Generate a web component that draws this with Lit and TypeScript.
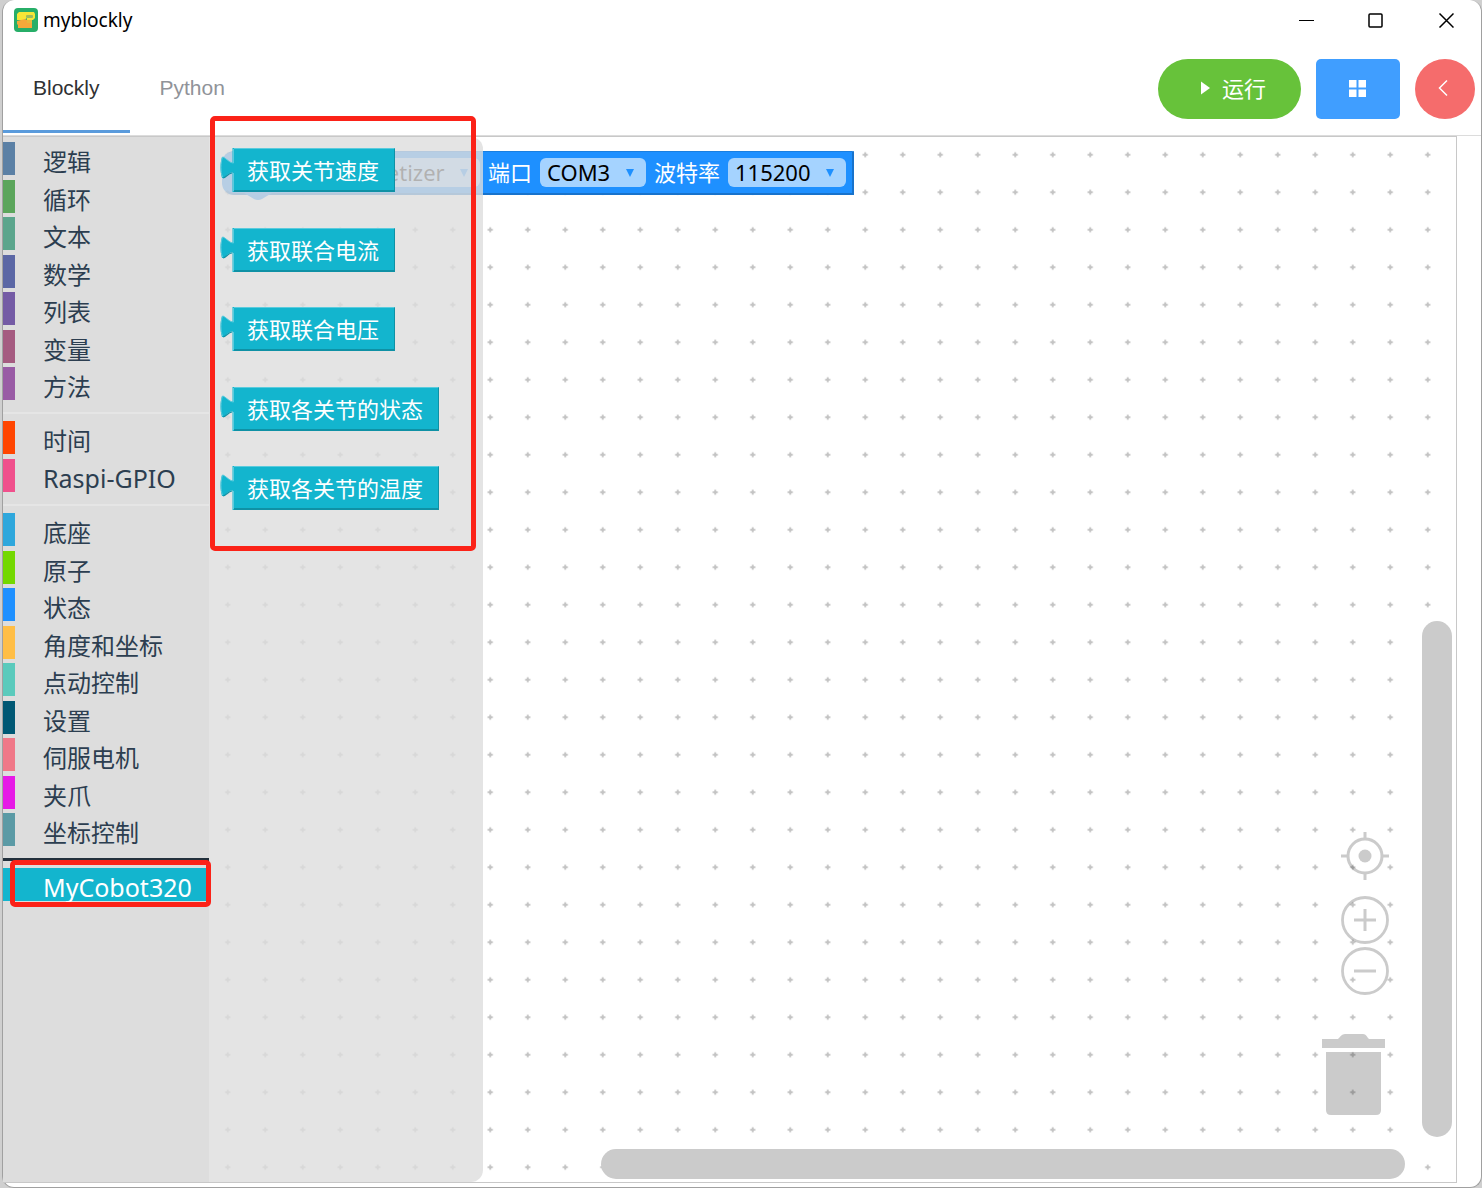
import { LitElement, html, svg, css } from "lit";
import { customElement, property, state } from "lit/decorators.js";

interface Category {
  name: string;
  color: string;
}

const GROUPS: Category[][] = [
  [
    { name: "逻辑", color: "#5b80a5" },
    { name: "循环", color: "#5ba55b" },
    { name: "文本", color: "#5ba58c" },
    { name: "数学", color: "#5b67a5" },
    { name: "列表", color: "#745ba5" },
    { name: "变量", color: "#a55b80" },
    { name: "方法", color: "#995ba5" },
  ],
  [
    { name: "时间", color: "#ff4500" },
    { name: "Raspi-GPIO", color: "#f0508c" },
  ],
  [
    { name: "底座", color: "#2ea7dc" },
    { name: "原子", color: "#73d800" },
    { name: "状态", color: "#1e90ff" },
    { name: "角度和坐标", color: "#ffbe46" },
    { name: "点动控制", color: "#5acabc" },
    { name: "设置", color: "#005874" },
    { name: "伺服电机", color: "#f07888" },
    { name: "夹爪", color: "#e619e6" },
    { name: "坐标控制", color: "#5b9aa5" },
  ],
  [{ name: "MyCobot320", color: "#13b5ce" }],
];

const FLYOUT_BLOCKS = [
  "获取关节速度",
  "获取联合电流",
  "获取联合电压",
  "获取各关节的状态",
  "获取各关节的温度",
];

const isLatin = (text: string) => /^[\x20-\x7e]+$/.test(text);

@customElement("category-list")
class CategoryList extends LitElement {
  @property() selected = "";

  static styles = css`
    :host {
      display: block;
      background: #dddddd;
      padding-top: 5px;
      font: 24px/33px "Noto Sans", "Noto Sans CJK SC", sans-serif;
      color: #2c3e50;
    }
    ul {
      list-style: none;
      margin: 0;
      padding: 0;
      display: flex;
      flex-direction: column;
    }
    li {
      position: relative;
      margin-bottom: 4px;
    }
    li:nth-child(odd):not(:last-child) {
      margin-bottom: 5px;
    }
    .rule {
      border: 0;
      height: 2px;
      margin: 8px 0 7px;
      background: #e5e5e5;
    }
    .rule.strong {
      height: 3px;
      background: #22303c;
    }
    button {
      display: block;
      width: 100%;
      height: 33px;
      border: 0;
      border-left: 12px solid;
      padding: 3px 0 0 28px;
      background: none;
      color: inherit;
      font: inherit;
      text-align: left;
      white-space: nowrap;
    }
    .label {
      color: #2c3e50;
    }
    .latin {
      font-size: 25px;
    }
    .selected .label {
      color: #ffffff;
    }
    .selected button {
      background: #13b5ce;
    }
    .mark {
      position: absolute;
      inset: -8px -2px -6px 7px;
      border: 5px solid #fb2218;
      border-radius: 5px;
      pointer-events: none;
      z-index: 1;
    }
  `;

  private pick(name: string) {
    this.dispatchEvent(new CustomEvent("pick", { detail: name }));
  }

  render() {
    return GROUPS.map(
      (group, i) => html`
        ${i > 0 ? html`<hr class="rule ${i === GROUPS.length - 1 ? "strong" : ""}" />` : ""}
        <ul>
          ${group.map(
            (c) => html`<li class=${c.name === this.selected ? "selected" : ""}>
              <button type="button" style="border-color:${c.color}" @click=${() => this.pick(c.name)}>
                <span class="label ${isLatin(c.name) ? "latin" : ""}">${c.name}</span>
              </button>
              ${c.name === this.selected ? html`<span class="mark"></span>` : ""}
            </li>`
          )}
        </ul>
      `
    );
  }
}

@customElement("value-block")
class ValueBlock extends LitElement {
  @property() label = "";

  static styles = css`
    :host {
      display: flex;
    }
    .tab {
      width: 14px;
      height: 44px;
      margin-right: -1px;
      flex: none;
      position: relative;
    }
    button {
      height: 44px;
      border: 1px solid;
      border-color: #5acbdd #0f91a5 #0f91a5 #13b5ce;
      border-bottom-width: 2px;
      padding: 0 15px 0 13px;
      background: #13b5ce;
      color: #ffffff;
      font: 22px/28px "Noto Sans", "Noto Sans CJK SC", sans-serif;
      white-space: nowrap;
    }
  `;

  render() {
    return html`
      <svg class="tab" viewBox="0 0 14 44" aria-hidden="true">
        <path d="M14 0H12.500V14.500C9 15 5 8 2 9C0 15 0 24 2 30C5 31 8 24 12.500 24.500V44H14Z" fill="#13b5ce" />
        <path d="M13.500 1V15C9 15 5 9 2.500 9C0.500 15 0.500 24 2.500 29M13.500 25V43" fill="none" stroke="#5acbdd" stroke-width="1" />
        <path d="M3 30C6 30 8 25 12 25" fill="none" stroke="#0f91a5" stroke-width="1.200" />
      </svg>
      <button type="button">${this.label}</button>
    `;
  }
}

@customElement("block-select")
class BlockSelect extends LitElement {
  @property() label = "";
  @property({ type: Array }) options: string[] = [];

  static styles = css`
    :host {
      display: inline-flex;
      position: relative;
    }
    select {
      appearance: none;
      height: 29px;
      border: 0;
      border-radius: 6px;
      padding: 0 35px 0 7px;
      background: #a5d3ff;
      color: #000000;
      font: 22px/29px "Noto Sans", "Noto Sans CJK SC", sans-serif;
    }
    svg {
      position: absolute;
      right: 12px;
      top: 11px;
      width: 8px;
      height: 8px;
      pointer-events: none;
    }
  `;

  render() {
    return html`
      <select aria-label=${this.label}>
        ${this.options.map((o) => html`<option>${o}</option>`)}
      </select>
      <svg viewBox="0 0 8 8" aria-hidden="true"><path d="M0 0H8L4 8Z" fill="#1e90ff" /></svg>
    `;
  }
}

@customElement("app-root")
class AppRoot extends LitElement {
  @state() private tab = "Blockly";
  @state() private category = "MyCobot320";

  static styles = css`
    :host {
      display: flex;
      box-sizing: border-box;
      min-height: 100vh;
      padding-left: 2px;
      background: #cfcfcf;
      font-family: "Liberation Sans", "Noto Sans CJK SC", sans-serif;
    }
    * {
      box-sizing: border-box;
    }
    button {
      font: inherit;
      border: 0;
      margin: 0;
      padding: 0;
      background: none;
    }
    .window {
      flex: 1;
      min-width: 0;
      display: flex;
      flex-direction: column;
      background: #ffffff;
      border: 1px solid #a0a0a0;
      border-top: 0;
      border-radius: 12px;
      padding-bottom: 4px;
    }
    .titlebar {
      display: flex;
      align-items: center;
      height: 40px;
      padding-left: 11px;
    }
    .logo {
      width: 24px;
      height: 24px;
      margin-right: 5px;
    }
    .title {
      flex: 1;
      font: 19px/24px "Noto Sans", "Noto Sans CJK SC", sans-serif;
      color: #000000;
    }
    .sys {
      width: 70px;
      height: 40px;
      display: grid;
      place-items: center;
    }
    .sys svg {
      width: 16px;
      height: 16px;
    }
    .toolbar {
      display: flex;
      justify-content: space-between;
      height: 96px;
      border-bottom: 1px solid #dcdcdc;
      font-size: 21px;
    }
    .tabs {
      display: flex;
      height: 93px;
    }
    .tab {
      padding: 6px 30px 0;
      border-bottom: 3px solid transparent;
      color: #909399;
    }
    .tab.active {
      color: #303133;
      border-color: #5a9bdc;
    }
    .actions {
      display: flex;
      gap: 15px;
      padding: 19px 6px 0 0;
    }
    .action {
      height: 60px;
      display: flex;
      align-items: center;
      justify-content: center;
      padding: 0 2px 2px 0;
      color: #ffffff;
    }
    .run {
      width: 143px;
      gap: 12px;
      padding: 0 0 5px 8px;
      border-radius: 30px;
      background: #67c23a;
      font-size: 22px;
    }
    .run svg {
      margin-top: 3px;
    }
    .blocks {
      width: 84px;
      border-radius: 5px;
      background: #409eff;
    }
    .back {
      width: 60px;
      border-radius: 50%;
      background: #f56c6c;
    }
    .main {
      flex: 1;
      display: flex;
      margin-right: 24px;
      border: 1px solid #c8c8c8;
      border-left: 0;
    }
    category-list {
      width: 206px;
      flex: none;
      position: relative;
      z-index: 1;
    }
    .canvas {
      flex: 1;
      min-width: 0;
      position: relative;
    }
    .grid {
      position: absolute;
      inset: 0;
      width: 100%;
      height: 100%;
    }
    .setup {
      position: absolute;
      left: 13px;
      top: 14px;
      height: 44px;
      display: flex;
      align-items: center;
      gap: 8px;
      padding: 0 6px 0 87px;
      border: 2px solid;
      border-color: #1a7fe0 #1873cc #1873cc #1e90ff;
      border-top-width: 1px;
      border-radius: 12px 0 0 12px;
      background: #1e90ff;
      color: #ffffff;
      font: 22px/29px "Noto Sans", "Noto Sans CJK SC", sans-serif;
      white-space: nowrap;
    }
    .nub {
      position: absolute;
      left: 20px;
      top: 41px;
      width: 28px;
      height: 8px;
    }
    .flyout {
      position: absolute;
      left: 0;
      top: 0;
      bottom: 0;
      width: 274px;
      padding: 11px 0 0 11px;
      display: flex;
      flex-direction: column;
      border-radius: 0 12px 12px 0;
      background: rgba(221, 221, 221, 0.8);
    }
    value-block {
      margin-bottom: 36px;
    }
    value-block:nth-child(even) {
      margin-bottom: 35px;
    }
    .mark {
      position: absolute;
      left: 1px;
      top: -21px;
      width: 266px;
      height: 435px;
      border: 5px solid #fb2218;
      border-radius: 5px;
      pointer-events: none;
    }
    .controls {
      position: absolute;
      right: 67px;
      bottom: 67px;
      display: flex;
      flex-direction: column;
      align-items: flex-end;
    }
    .controls button {
      display: block;
      opacity: 0.2;
    }
    .controls svg {
      display: block;
    }
    .center {
      margin-bottom: 16px;
    }
    .zoom-in {
      margin-bottom: 3px;
    }
    .trash {
      margin: 39px 4px 0 0;
    }
    .bar {
      position: absolute;
      border-radius: 15px;
      background: #cbcbcb;
    }
    .bar.vertical {
      right: 4px;
      bottom: 45px;
      width: 30px;
      height: calc(50% - 6px);
    }
    .bar.horizontal {
      right: 51px;
      bottom: 3px;
      height: 30px;
      width: calc(65% - 7px);
    }
  `;

  private titlebar() {
    return html`
      <header class="titlebar">
        <svg class="logo" viewBox="0 0 24 24" aria-hidden="true">
          <rect width="24" height="24" rx="4" fill="#27ae68" />
          <path d="M3 6L5 4H20L21 6V10L19 12H13V10L10 12H3Z" fill="#f7e636" />
          <rect x="12" y="7" width="7" height="3" rx="1" fill="#9dbb5c" />
          <path d="M3 13L11 11L13 12H18V20H4V17L3 16Z" fill="#f5a83a" />
          <path d="M13 12H18V15H13Z" fill="#e8b93c" />
        </svg>
        <span class="title">myblockly</span>
        <button class="sys" aria-label="最小化">
          <svg viewBox="0 0 16 16"><path d="M1 8.500H16" stroke="#000" fill="none" /></svg>
        </button>
        <button class="sys" aria-label="最大化">
          <svg viewBox="0 0 16 16">
            <rect x="1" y="2" width="13" height="13" rx="1" stroke="#000" stroke-width="1.500" fill="none" />
          </svg>
        </button>
        <button class="sys" aria-label="关闭">
          <svg viewBox="0 0 16 16"><path d="M1.500 1.500L15.500 15.500M15.500 1.500L1.500 15.500" stroke="#000" stroke-width="1.500" fill="none" /></svg>
        </button>
      </header>
    `;
  }

  private toolbar() {
    return html`
      <div class="toolbar">
        <nav class="tabs" role="tablist">
          ${["Blockly", "Python"].map(
            (t) => html`<button
              role="tab"
              class="tab ${t === this.tab ? "active" : ""}"
              aria-selected=${t === this.tab}
              @click=${() => (this.tab = t)}
            >${t}</button>`
          )}
        </nav>
        <div class="actions">
          <button class="action run">
            <svg width="9" height="14" viewBox="0 0 9 14" aria-hidden="true"><path d="M0 0.500L9 7L0 13.500Z" fill="#fff" /></svg>
            <span>运行</span>
          </button>
          <button class="action blocks" aria-label="模块">
            <svg width="17" height="17" viewBox="0 0 17 17" fill="#fff">
              <rect width="7.500" height="7.500" /><rect x="9.500" width="7.500" height="7.500" />
              <rect y="9.500" width="7.500" height="7.500" /><rect x="9.500" y="9.500" width="7.500" height="7.500" />
            </svg>
          </button>
          <button class="action back" aria-label="返回">
            <svg width="12" height="18" viewBox="0 0 12 18" fill="none" stroke="#fff" stroke-width="1.500">
              <path d="M9 1.500L1.500 9L9 16.500" />
            </svg>
          </button>
        </div>
      </div>
    `;
  }

  private grid() {
    return html`
      <svg class="grid" aria-hidden="true">
        ${svg`<defs>
          <pattern id="dots" width="25" height="25" patternUnits="userSpaceOnUse" patternTransform="translate(0 -1) scale(1.5)">
            <path d="M12.500 10.800V14.200M10.800 12.500H14.200" stroke="#c4c4c4" stroke-width="1.300" />
          </pattern>
        </defs>
        <rect width="100%" height="100%" fill="url(#dots)" />`}
      </svg>
    `;
  }

  private controls() {
    return html`
      <div class="controls">
        <button class="center" aria-label="居中">
          <svg width="48" height="48" viewBox="0 0 48 48" fill="none" stroke="#000" stroke-width="3">
            <circle cx="24" cy="24" r="17" />
            <path d="M24 0V7M24 41V48M0 24H7M41 24H48" />
            <circle cx="24" cy="24" r="6.500" fill="#000" stroke="none" />
          </svg>
        </button>
        <button class="zoom-in" aria-label="放大">
          <svg width="48" height="48" viewBox="0 0 48 48" fill="none" stroke="#000" stroke-width="2.800">
            <circle cx="24" cy="24" r="22.500" />
            <path d="M24 13V35M13 24H35" stroke-width="3" />
          </svg>
        </button>
        <button class="zoom-out" aria-label="缩小">
          <svg width="48" height="48" viewBox="0 0 48 48" fill="none" stroke="#000" stroke-width="2.800">
            <circle cx="24" cy="24" r="22.500" />
            <path d="M13 24H35" stroke-width="3" />
          </svg>
        </button>
        <button class="trash" aria-label="删除">
          <svg width="63" height="81" viewBox="0 0 63 81" fill="#000">
            <path d="M0 5H16C18 3 20 0 23 0H41C44 0 45 3 47 5H63V14H0Z" />
            <path d="M4 18H59V76Q59 81 54 81H9Q4 81 4 76Z" />
          </svg>
        </button>
      </div>
    `;
  }

  render() {
    return html`
      <div class="window">
        ${this.titlebar()} ${this.toolbar()}
        <main class="main">
          <category-list
            .selected=${this.category}
            @pick=${(e: CustomEvent<string>) => (this.category = e.detail)}
          ></category-list>
          <section class="canvas">
            ${this.grid()}
            <div class="setup">
              <svg class="nub" viewBox="0 0 28 8" aria-hidden="true"><path d="M0 0H28L18 6Q14 8 10 6Z" fill="#1e90ff" /></svg>
              <block-select label="机型" .options=${["myPalletizer"]}></block-select>
              <span>端口</span>
              <block-select label="端口" .options=${["COM3"]}></block-select>
              <span>波特率</span>
              <block-select label="波特率" .options=${["115200"]}></block-select>
            </div>
            ${this.controls()}
            <div class="bar vertical"></div>
            <div class="bar horizontal"></div>
            <div class="flyout">
              ${FLYOUT_BLOCKS.map((b) => html`<value-block .label=${b}></value-block>`)}
            </div>
            <div class="mark"></div>
          </section>
        </main>
      </div>
    `;
  }
}
